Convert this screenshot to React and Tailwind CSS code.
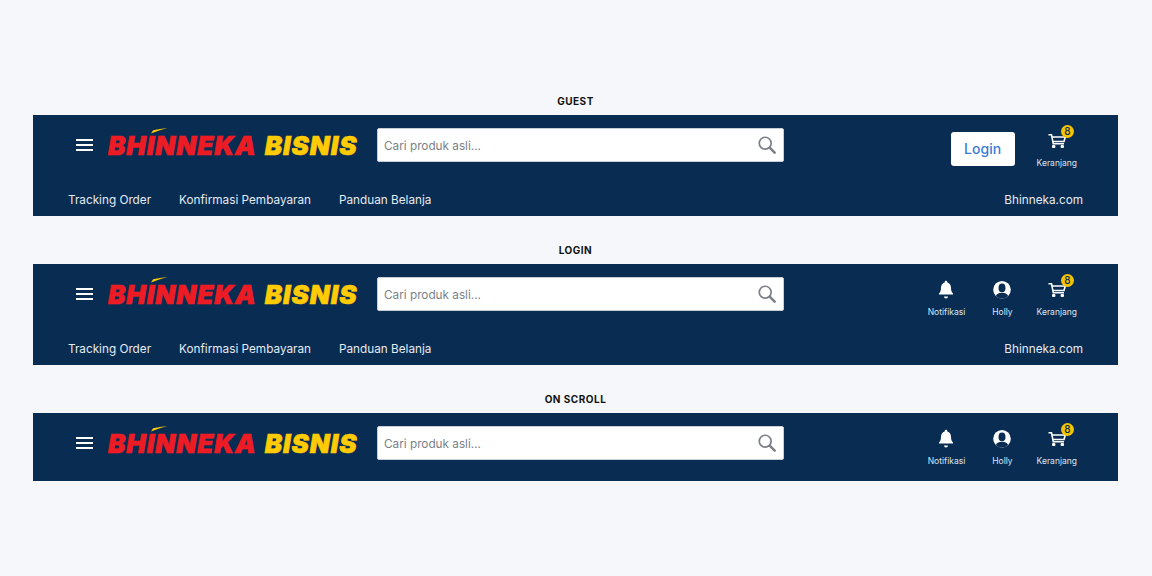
import React from "react";

function Burger() {
  return (
    <div className="flex flex-col gap-[3px] w-[17px] shrink-0">
      <span className="h-[2px] bg-white" />
      <span className="h-[2px] bg-white" />
      <span className="h-[2px] bg-white" />
    </div>
  );
}

function Logo() {
  return (
    <div className="relative ml-[15px] w-[249px] h-[34px] pt-[2px] shrink-0 flex items-center whitespace-nowrap italic font-black text-[26px] leading-none tracking-[0.95px]">
      <span className="text-[#ed1c24] [-webkit-text-stroke:0.6px_#ed1c24]">BHINNEKA</span>
      <span className="text-[#ffcb05] ml-[8px] [-webkit-text-stroke:0.6px_#ffcb05]">BISNIS</span>
      <svg className="absolute left-[43px] top-[0px]" width="17" height="6" viewBox="0 0 20 7" preserveAspectRatio="none">
        <path d="M0 6.500 L2.500 2.500 Q10 1.200 19.500 0 Q9 2.500 0 6.500Z" fill="#ffcb05" />
      </svg>
    </div>
  );
}

function SearchIcon() {
  return (
    <svg width="18" height="18" viewBox="0 0 20 20" fill="none" stroke="#7b7f87">
      <circle cx="8" cy="8" r="6.600" strokeWidth="1.900" />
      <path d="M13 13l5.500 5.500" strokeWidth="2.800" strokeLinecap="round" />
    </svg>
  );
}

function SearchBox() {
  return (
    <div className="ml-[20px] w-[407px] h-[34px] bg-white rounded-[2px] border border-[#c9ced6] flex items-center justify-between pl-[6px] pr-[7px] shrink-0">
      <span className="pt-[3px] text-[11.750px] text-[#7b7f87]">Cari produk asli...</span>
      <SearchIcon />
    </div>
  );
}

function BellIcon() {
  return (
    <svg width="20" height="20" viewBox="0 0 20 20" fill="#fff">
      <path d="M10 1.700c.8 0 1.300.6 1.300 1.300v.5c2.500.6 3.700 2.800 3.700 5.300 0 3 .7 4.600 2 5.800v1H3v-1c1.300-1.200 2-2.800 2-5.800 0-2.500 1.200-4.700 3.700-5.300V3c0-.7.5-1.300 1.300-1.300z" />
      <path d="M8 17.400h4a2 2 0 0 1-4 0z" />
    </svg>
  );
}

function UserIcon() {
  return (
    <svg width="20" height="20" viewBox="0 0 20 20">
      <circle cx="10" cy="10.700" r="8.800" fill="#fff" />
      <ellipse cx="10" cy="8.900" rx="3.500" ry="4.400" fill="#092c52" />
      <path d="M3.800 16.900c1-2.300 3.200-3.200 6.200-3.200s5.200.9 6.200 3.200a8.800 8.800 0 0 1-6.200 2.600 8.800 8.800 0 0 1-6.200-2.600z" fill="#092c52" />
    </svg>
  );
}

function CartIcon() {
  return (
    <svg width="20" height="20" viewBox="0 0 20 20" fill="none" stroke="#fff" strokeWidth="1.600">
      <path d="M1.500 4.800h3l1.800 9h10.700" />
      <path d="M4.900 7h13.400l-1.300 4.500H5.800" />
      <rect x="5" y="15" width="3.400" height="3" rx="1" fill="#fff" stroke="none" />
      <rect x="13.600" y="15" width="3.400" height="3" rx="1" fill="#fff" stroke="none" />
    </svg>
  );
}

function HeaderItem({ icon, label, badge, className }) {
  return (
    <div className={`relative flex flex-col items-center text-[#dfe5ee] ${className || ""}`}>
      <div className="relative h-[20px] w-[20px]">
        {icon}
        {badge && (
          <span className="absolute top-[-5px] left-[14px] w-[13px] h-[13px] rounded-full bg-[#f5c400] text-[#092c52] text-[10px] leading-[13px] text-center font-medium">
            {badge}
          </span>
        )}
      </div>
      <span className="mt-[8px] text-[8.500px] leading-[11px] whitespace-nowrap">{label}</span>
    </div>
  );
}

function Actions({ guest }) {
  if (guest) {
    return (
      <div className="ml-auto mt-[8px] flex items-center gap-[22px]">
        <button className="w-[64px] h-[34px] pb-[2px] bg-white rounded-[3px] text-[#3a7bd5] text-[14px] font-medium">
          Login
        </button>
        <HeaderItem icon={<CartIcon />} label="Keranjang" badge="8" />
      </div>
    );
  }
  return (
    <div className="ml-auto mt-[8px] flex items-center gap-[24px]">
      <HeaderItem icon={<BellIcon />} label="Notifikasi" className="mr-[3px]" />
      <HeaderItem icon={<UserIcon />} label="Holly" />
      <HeaderItem icon={<CartIcon />} label="Keranjang" badge="8" />
    </div>
  );
}

function NavRow() {
  return (
    <div className="h-[41px] pt-[10px] pl-[35px] pr-[35px] flex items-center gap-[28px] text-[11.750px] text-[#e6ebf2]">
      <span>Tracking Order</span>
      <span>Konfirmasi Pembayaran</span>
      <span>Panduan Belanja</span>
      <span className="ml-auto">Bhinneka.com</span>
    </div>
  );
}

function Section({ title, guest, nav }) {
  return (
    <section>
      <h2 className="h-[14px] mb-[7px] text-center text-[10px] leading-[14px] font-bold tracking-[0.5px] text-[#111]">
        {title}
      </h2>
      <div className={`bg-[#092c52] ${nav ? "" : "pb-[8px]"}`}>
        <div className="h-[60px] pl-[43px] pr-[41px] flex items-center">
          <Burger />
          <Logo />
          <SearchBox />
          <Actions guest={guest} />
        </div>
        {nav && <NavRow />}
      </div>
    </section>
  );
}

export default function App() {
  return (
    <div className="min-h-[576px] bg-[#f5f7fb] pt-[94px] pl-[33px] pr-[34px] flex flex-col gap-[27px] font-['Inter',sans-serif]">
      <Section title="GUEST" guest nav />
      <Section title="LOGIN" nav />
      <Section title="ON SCROLL" />
    </div>
  );
}
